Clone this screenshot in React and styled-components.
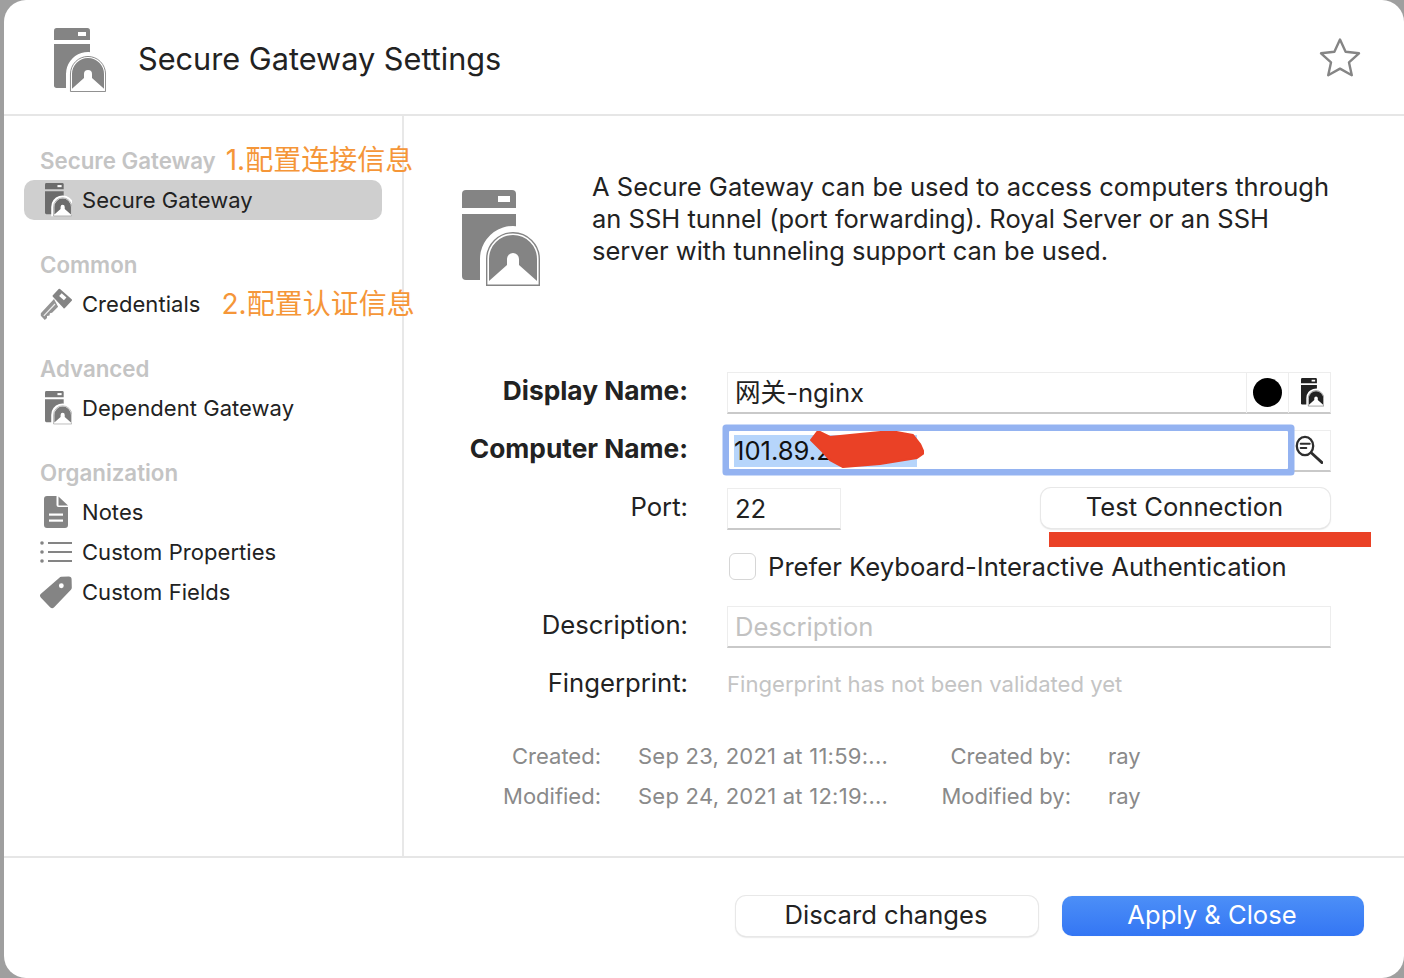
import React from 'react';
import styled, { createGlobalStyle } from 'styled-components';

const GlobalStyle = createGlobalStyle`
  html, body {
    margin: 0;
    padding: 0;
    height: 100%;
    background: #9f9f9f;
  }
  body {
    font-family: Inter, "Noto Sans CJK SC", "Liberation Sans", sans-serif;
    color: #222;
    overflow: hidden;
  }
`;

const Window = styled.div`
  box-sizing: border-box;
  margin-left: 4px;
  height: 978px;
  background: #fff;
  border-radius: 22px;
  display: flex;
  flex-direction: column;
  overflow: hidden;
`;

const Header = styled.header`
  box-sizing: border-box;
  height: 116px;
  flex: none;
  border-bottom: 2px solid #e6e6e6;
  display: flex;
  align-items: center;
  padding: 0 43px 0 50px;
`;

const HeaderIcon = styled.div`
  margin-top: 10px;
  flex: none;
`;

const Title = styled.h1`
  margin: 2px 0 0 32px;
  flex: 1;
  font-size: 30.7px;
  font-weight: 400;
  color: #222;
`;

const Body = styled.div`
  flex: 1;
  display: flex;
  min-height: 0;
`;

const Sidebar = styled.aside`
  box-sizing: border-box;
  width: 400px;
  flex: none;
  border-right: 2px solid #e8e8e8;
  padding: 24px 20px 0;
  display: flex;
  flex-direction: column;
  gap: 24px;
`;

const Group = styled.div`
  display: flex;
  flex-direction: column;
`;

const GroupTitle = styled.div`
  height: 40px;
  line-height: 42px;
  padding-left: 16px;
  font-size: 22.3px;
  font-weight: 600;
  color: #c4c4c4;
  white-space: nowrap;
  display: flex;
`;

const Row = styled.div`
  height: 40px;
  padding-left: 16px;
  border-radius: 10px;
  display: flex;
  align-items: center;
  gap: 10px;
  font-size: 22px;
  letter-spacing: 0.05px;
  color: #222;
  white-space: nowrap;
  background: ${(props) => (props.$selected ? '#cfcfcf' : 'transparent')};
`;

const RowIcon = styled.div`
  width: 32px;
  height: 34px;
  flex: none;
  display: flex;
  align-items: center;
  justify-content: ${(props) => (props.$right ? 'flex-end' : 'center')};
`;

const Note = styled.span`
  margin-left: ${(props) => props.$gap}px;
  font-size: 28px;
  line-height: 41px;
  font-weight: 400;
  letter-spacing: 0;
  color: #f59638;
`;

const Main = styled.main`
  flex: 1;
  box-sizing: border-box;
  padding: 55px 0 0 48px;
  display: flex;
  flex-direction: column;
`;

const Intro = styled.div`
  height: 114px;
  padding-left: 10px;
  display: flex;
  gap: 52px;
`;

const IntroIcon = styled.div`
  margin-top: 19px;
  flex: none;
`;

const IntroText = styled.p`
  margin: 0;
  font-size: 25.5px;
  line-height: 32px;
  color: #222;
  white-space: nowrap;
`;

const Form = styled.div`
  margin-top: 87px;
  display: grid;
  grid-template-columns: 236px 604px;
  grid-template-rows: 42px 42px 42px 44px 42px 42px;
  column-gap: 39px;
  row-gap: 16px;
  align-items: center;
`;

const Label = styled.label`
  padding-bottom: 6px;
  text-align: right;
  font-size: ${(props) => (props.$bold ? '26.3px' : '25.7px')};
  font-weight: ${(props) => (props.$bold ? 700 : 400)};
  color: #222;
  white-space: nowrap;
`;

const Field = styled.div`
  box-sizing: border-box;
  height: 42px;
  width: ${(props) => props.$width || '100%'};
  background: #fff;
  border: 1px solid #ededed;
  border-bottom: 2px solid #c9c9c9;
  padding: ${(props) => (props.$placeholder ? '1px 0 0 7px' : '0 0 0 7px')};
  margin-top: ${(props) => (props.$placeholder ? '-1px' : '0')};
  display: flex;
  align-items: center;
  font-size: 25.6px;
  color: ${(props) => (props.$placeholder ? '#c2c2c2' : '#222')};
  white-space: nowrap;
`;

const FieldRow = styled.div`
  display: flex;
  align-items: flex-start;
  justify-content: ${(props) => (props.$spread ? 'space-between' : 'flex-start')};
`;

const FieldText = styled.span`
  flex: 1;
  padding-bottom: 4px;
`;

const FieldButton = styled.div`
  box-sizing: border-box;
  width: 42px;
  height: 40px;
  flex: none;
  padding-right: ${(props) => (props.$right ? '6px' : '0')};
  border-left: 1px solid #ededed;
  display: flex;
  align-items: center;
  justify-content: ${(props) => (props.$right ? 'flex-end' : 'center')};
`;

const Dot = styled.div`
  width: 29px;
  height: 29px;
  border-radius: 50%;
  background: #000;
`;

const FocusField = styled.div`
  position: relative;
  z-index: 1;
  box-sizing: border-box;
  width: 559px;
  height: 38px;
  flex: none;
  margin: 1px 0 0 2px;
  padding: 1px 0 0 5px;
  background: #fff;
  border-radius: 1px;
  box-shadow: 0 0 0 6.5px #94b3f1;
  display: flex;
  align-items: center;
  font-size: 25.6px;
  color: #111;
`;

const Selected = styled.span`
  display: inline-block;
  width: 183px;
  height: 32px;
  line-height: 32px;
  background: #b6d5fb;
  white-space: nowrap;
`;

const Scribble = styled.svg`
  position: absolute;
  left: 81px;
  top: 0;
`;

const SearchBox = styled.div`
  box-sizing: border-box;
  height: 42px;
  flex: 1;
  padding-bottom: 2px;
  border: 1px solid #ededed;
  border-left: none;
  border-bottom: 2px solid #c9c9c9;
  display: flex;
  align-items: center;
  justify-content: center;
`;

const ButtonWrap = styled.div`
  position: relative;
  margin-right: 1px;
`;

const RedBar = styled.div`
  position: absolute;
  left: 8px;
  top: 44px;
  width: 322px;
  height: 15px;
  background: #ea4126;
`;

const PushButton = styled.button`
  display: block;
  box-sizing: border-box;
  width: ${(props) => props.$width}px;
  height: 40px;
  padding: 0 2px 4px 0;
  border: none;
  border-radius: 10px;
  font-family: inherit;
  font-size: 25.6px;
  color: #222;
  background: #fff;
  box-shadow: 0 0 0 1px #e8e8e8, 0 1px 2px rgba(0, 0, 0, 0.28);
`;

const PrimaryButton = styled(PushButton)`
  color: #fff;
  background: linear-gradient(#4c8ff7, #3476f4);
  box-shadow: 0 0 1px rgba(0, 0, 0, 0.15);
`;

const CheckRow = styled.div`
  display: flex;
  align-items: center;
  gap: 12px;
  padding: 0 0 4px 2px;
  font-size: 25.65px;
  color: #222;
  white-space: nowrap;
`;

const CheckBox = styled.div`
  box-sizing: border-box;
  width: 27px;
  height: 27px;
  border: 1px solid #d6d6d6;
  border-radius: 6px;
  background: #fff;
`;

const Hint = styled.div`
  padding-bottom: 2px;
  font-size: 22.1px;
  color: #c4c4c4;
  white-space: nowrap;
`;

const Meta = styled.div`
  margin-top: 30px;
  display: grid;
  grid-template-columns: 149px 265px 131px auto;
  grid-auto-rows: 40px;
  column-gap: 37px;
  align-items: center;
  font-size: 22px;
  color: #8a8a8a;
  white-space: nowrap;
`;

const MetaLabel = styled.div`
  text-align: right;
`;

const MetaValue = styled.div`
  letter-spacing: 0.25px;
`;

const Footer = styled.footer`
  box-sizing: border-box;
  height: 122px;
  flex: none;
  border-top: 2px solid #e6e6e6;
  padding: 38px 40px 0 0;
  display: flex;
  justify-content: flex-end;
  align-items: flex-start;
  gap: 24px;
`;

// arch-over-a-server drawing, same one at every size
const GatewayIcon = ({ size = 78, color = '#848484' }) => (
  <svg width={size} height={(size * 96) / 78} viewBox="0 0 78 96">
    <path d="M4 0h46a4 4 0 0 1 4 4v14H0V4a4 4 0 0 1 4-4z" fill={color} />
    <rect x="36" y="6" width="12" height="6" fill="#fff" />
    <path d="M0 24h54v66H4a4 4 0 0 1-4-4z" fill={color} />
    <path d="M18 96V69a33 33 0 0 1 60 -19V96z" fill="#fff" />
    <path d="M24.7 95.3V69a26.3 26.3 0 0 1 52.6 0V95.3z" fill="#fff" stroke={color} strokeWidth="1.4" />
    <path d="M27 91V69a24 24 0 0 1 48 0V91L57 75V69a6 6 0 0 0-12 0V75z" fill={color} />
  </svg>
);

const KeyIcon = () => (
  <svg width="32" height="33" viewBox="0 0 32 33">
    <path d="M14 11 .8 25.2v2.6L4.8 32 7 30v-2l2.5-.4.4-2.4 2.2-.5 6-6z" fill="#949494" />
    <path d="M15 16 3.8 27.8" stroke="#efefef" strokeWidth="1.2" />
    <path d="M19.4 1.8 31 12 24.2 19.4 13.6 8z" fill="#848484" stroke="#848484" strokeWidth="2" strokeLinejoin="round" />
    <rect x="19.6" y="6.8" width="6.4" height="3.8" transform="rotate(42 22.8 8.7)" fill="#fff" />
  </svg>
);

const NotesIcon = () => (
  <svg width="24" height="32" viewBox="0 0 24 32">
    <path d="M3 0h9.5v9a2 2 0 0 0 2 2H24v18a3 3 0 0 1-3 3H3a3 3 0 0 1-3-3V3a3 3 0 0 1 3-3z" fill="#848484" />
    <path d="M14.5.5 24 9.5h-9.5z" fill="#848484" />
    <rect x="5" y="17.5" width="14" height="2.2" fill="#fff" />
    <rect x="5" y="23.5" width="14" height="2.2" fill="#fff" />
  </svg>
);

const ListIcon = () => (
  <svg width="32" height="22" viewBox="0 0 32 22">
    <circle cx="2" cy="2" r="1.8" fill="#848484" />
    <circle cx="2" cy="11" r="1.8" fill="#848484" />
    <circle cx="2" cy="20" r="1.8" fill="#848484" />
    <rect x="8" y="1" width="24" height="2" fill="#848484" />
    <rect x="8" y="10" width="24" height="2" fill="#848484" />
    <rect x="8" y="19" width="24" height="2" fill="#848484" />
  </svg>
);

const TagIcon = () => (
  <svg width="33" height="33" viewBox="0 0 33 33">
    <path
      fillRule="evenodd"
      d="M20 1.2a3 3 0 0 1 2-.9l7.5-.2A3 3 0 0 1 32.6 3l.2 8.5a3 3 0 0 1-.9 2.1L14.6 31.6a3 3 0 0 1-4.2 0L1 21.9a3 3 0 0 1 0-4.2zM19.5 9.5a2.5 2.5 0 1 0 5 0 2.5 2.5 0 1 0-5 0z"
      fill="#848484"
    />
  </svg>
);

const SearchIcon = () => (
  <svg width="28" height="29" viewBox="0 0 28 29" fill="none" stroke="#2e2e2e" strokeWidth="2.3" strokeLinecap="round">
    <ellipse cx="10" cy="11" rx="8.2" ry="9.2" />
    <path d="M5.7 8.7h9M5.7 13h5.6" strokeWidth="2" />
    <path d="M16.5 18 27 27.6" strokeWidth="2.8" />
  </svg>
);

const StarIcon = () => (
  <svg width="42" height="40" viewBox="0 0 42 40" fill="none" stroke="#858585" strokeWidth="2.4" strokeLinejoin="round">
    <path d="M21 2.5 26.6 14.8 40 16.3 30 25.4 32.8 38.2 21 31.6 9.2 38.2 12 25.4 2 16.3 15.4 14.8z" />
  </svg>
);

const menu = [
  { title: 'Secure Gateway', note: '1.配置连接信息', gap: 10, items: [{ label: 'Secure Gateway', icon: <GatewayIcon size={27} color="#6c6c6c" />, right: true, selected: true }] },
  { title: 'Common', items: [{ label: 'Credentials', icon: <KeyIcon />, note: '2.配置认证信息', gap: 11 }] },
  { title: 'Advanced', items: [{ label: 'Dependent Gateway', icon: <GatewayIcon size={27} color="#7a7a7a" />, right: true }] },
  {
    title: 'Organization',
    items: [
      { label: 'Notes', icon: <NotesIcon /> },
      { label: 'Custom Properties', icon: <ListIcon /> },
      { label: 'Custom Fields', icon: <TagIcon /> },
    ],
  },
];

const App = () => {
  return (
    <>
      <GlobalStyle />
      <Window>
        <Header>
          <HeaderIcon>
            <GatewayIcon size={52} />
          </HeaderIcon>
          <Title>Secure Gateway Settings</Title>
          <StarIcon />
        </Header>
        <Body>
          <Sidebar>
            {menu.map((group) => (
              <Group key={group.title}>
                <GroupTitle>
                  {group.title}
                  {group.note && <Note $gap={group.gap}>{group.note}</Note>}
                </GroupTitle>
                {group.items.map((item) => (
                  <Row key={item.label} $selected={item.selected}>
                    <RowIcon $right={item.right}>{item.icon}</RowIcon>
                    {item.label}
                    {item.note && <Note $gap={item.gap}>{item.note}</Note>}
                  </Row>
                ))}
              </Group>
            ))}
          </Sidebar>
          <Main>
            <Intro>
              <IntroIcon>
                <GatewayIcon />
              </IntroIcon>
              <IntroText>
                A Secure Gateway can be used to access computers through
                <br />
                an SSH tunnel (port forwarding). Royal Server or an SSH
                <br />
                server with tunneling support can be used.
              </IntroText>
            </Intro>
            <Form>
              <Label $bold>Display Name:</Label>
              <Field>
                <FieldText>网关-nginx</FieldText>
                <FieldButton>
                  <Dot />
                </FieldButton>
                <FieldButton $right>
                  <GatewayIcon size={23} color="#222" />
                </FieldButton>
              </Field>
              <Label $bold>Computer Name:</Label>
              <FieldRow>
                <FocusField>
                  <Selected>101.89.2</Selected>
                  <Scribble width="114" height="38" viewBox="0 0 114 38">
                    <path
                      d="M8 0 1 9 13 21 20 29 33 36 70 33 107 27 114 22 110 13 103 4 81 0 50 3 20 6z"
                      fill="#ea4126"
                      stroke="#ea4126"
                      strokeWidth="2"
                      strokeLinejoin="round"
                    />
                  </Scribble>
                </FocusField>
                <SearchBox>
                  <SearchIcon />
                </SearchBox>
              </FieldRow>
              <Label>Port:</Label>
              <FieldRow $spread>
                <Field $width="114px">22</Field>
                <ButtonWrap>
                  <PushButton $width={289}>Test Connection</PushButton>
                  <RedBar />
                </ButtonWrap>
              </FieldRow>
              <span />
              <CheckRow>
                <CheckBox />
                Prefer Keyboard-Interactive Authentication
              </CheckRow>
              <Label>Description:</Label>
              <Field $placeholder>Description</Field>
              <Label>Fingerprint:</Label>
              <Hint>Fingerprint has not been validated yet</Hint>
            </Form>
            <Meta>
              <MetaLabel>Created:</MetaLabel>
              <MetaValue>Sep 23, 2021 at 11:59:...</MetaValue>
              <MetaLabel>Created by:</MetaLabel>
              <div>ray</div>
              <MetaLabel>Modified:</MetaLabel>
              <MetaValue>Sep 24, 2021 at 12:19:...</MetaValue>
              <MetaLabel>Modified by:</MetaLabel>
              <div>ray</div>
            </Meta>
          </Main>
        </Body>
        <Footer>
          <PushButton $width={302}>Discard changes</PushButton>
          <PrimaryButton $width={302}>Apply &amp; Close</PrimaryButton>
        </Footer>
      </Window>
    </>
  );
};

export default App;
